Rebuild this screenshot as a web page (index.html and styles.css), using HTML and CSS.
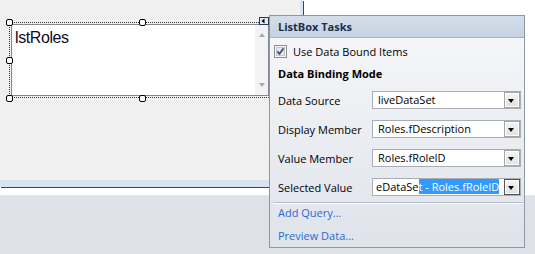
FILE: index.html
```html
<!DOCTYPE html>
<html lang="en">

<head>
  <meta charset="UTF-8">
  <title>ListBox Tasks</title>
  <link rel="stylesheet" href="styles.css">
</head>

<body>
  <div class="designer">
    <div class="surface">
      <div class="form">
        <div class="selection">
          <div class="listbox">
            <div class="items">lstRoles</div>
            <div class="vscroll"><i class="up"></i><i class="down"></i></div>
          </div>
          <i class="grip grip-tl"></i>
          <i class="grip grip-tc"></i>
          <i class="grip grip-ml"></i>
          <i class="grip grip-bl"></i>
          <i class="grip grip-bc"></i>
          <span class="smarttag">
            <svg width="10" height="8" viewBox="0 0 10 8">
              <rect x="0.5" y="0.5" width="9" height="7" fill="#dfeaf6" stroke="#2c3a4e"/>
              <polygon points="2.5,4 5.5,1.5 5.5,6.5" fill="#000"/>
            </svg>
          </span>
        </div>
      </div>
    </div>
    <div class="tray"></div>

    <div class="tasks">
      <div class="tasks-head">ListBox Tasks</div>
      <div class="tasks-body">
        <label class="check">
          <svg width="13" height="13" viewBox="0 0 13 13">
            <rect x="0.5" y="0.5" width="12" height="12" fill="#f6f6f6" stroke="#8e8f8f"/>
            <rect x="2.5" y="2.5" width="8" height="8" fill="#e4e7ec" stroke="#c3c8d0"/>
            <path d="M3.3 6.4 L5.4 8.8 L9.6 3.4" fill="none" stroke="#3d5487" stroke-width="1.8"/>
          </svg>
          Use Data Bound Items
        </label>
        <div class="group">Data Binding Mode</div>
        <div class="fields">
          <div class="field">
            <span class="name">Data Source</span>
            <div class="combo"><span class="value">liveDataSet</span><span class="drop"></span></div>
          </div>
          <div class="field">
            <span class="name">Display Member</span>
            <div class="combo"><span class="value">Roles.fDescription</span><span class="drop"></span></div>
          </div>
          <div class="field">
            <span class="name">Value Member</span>
            <div class="combo"><span class="value">Roles.fRoleID</span><span class="drop"></span></div>
          </div>
          <div class="field">
            <span class="name">Selected Value</span>
            <div class="combo focused"><span class="value scrolled">eDataSe<span class="sel">t - Roles.fRoleID</span></span><span class="drop"></span></div>
          </div>
        </div>
        <div class="sep"></div>
        <a class="link">Add Query...</a>
        <a class="link">Preview Data...</a>
      </div>
    </div>
  </div>
</body>

</html>
```

FILE: styles.css
```css
* {
  margin: 0;
  padding: 0;
  box-sizing: border-box;
}

body {
  width: 535px;
  height: 254px;
  overflow: hidden;
  background: #fff;
  font-family: "Open Sans", "Liberation Sans", sans-serif;
  font-size: 11px;
  color: #000;
}

.designer {
  position: relative;
  height: 254px;
  display: flex;
  flex-direction: column;
}

.surface {
  flex: none;
  height: 195px;
}

/* form being designed */
.form {
  width: 303px;
  height: 187px;
  padding: 22px 0 0 9px;
  background: #f0f0f0;
  border-right: 3px solid #d7e4f2;
  border-bottom: 7px solid #d7e4f2;
  box-shadow: 1px 1px 0 #40454d;
}

.tray {
  flex: 1;
  background: #dfe1e8;
  border-top: 1px solid #e7e8eb;
}

/* selected listbox */
.selection {
  position: relative;
  width: 262px;
  height: 76px;
  padding: 1px;
  border: 1px dotted #333;
}

.listbox {
  display: flex;
  height: 100%;
  border: 1px solid #828790;
  background: #fff;
}

.items {
  flex: 1;
  padding: 4px 0 0 3px;
  font-family: "Liberation Sans", Arial, sans-serif;
  font-size: 16px;
  letter-spacing: -0.4px;
  line-height: 18px;
  color: #0c0c24;
}

.vscroll {
  width: 13px;
  padding: 8px 0;
  display: flex;
  flex-direction: column;
  justify-content: space-between;
  align-items: center;
  background: #f3f3f3;
}

.vscroll i {
  display: block;
  width: 0;
  height: 0;
  border-left: 3.5px solid transparent;
  border-right: 3.5px solid transparent;
}

.vscroll .up {
  border-bottom: 4px solid #a8a8a8;
}

.vscroll .down {
  border-top: 4px solid #a8a8a8;
}

.grip {
  position: absolute;
  width: 7px;
  height: 7px;
  border: 1px solid #000;
  border-radius: 2px;
  background: #fff;
}

.grip-tl { left: -4px; top: -4px; }
.grip-tc { left: 129px; top: -4px; }
.grip-ml { left: -4px; top: 34px; }
.grip-bl { left: -4px; top: 72px; }
.grip-bc { left: 129px; top: 72px; }

.smarttag {
  position: absolute;
  left: 249px;
  top: -6px;
  width: 10px;
  height: 8px;
}

.smarttag svg {
  display: block;
}

/* smart tag panel */
.tasks {
  position: absolute;
  left: 269px;
  top: 15px;
  width: 256px;
  height: 233px;
  border: 1px solid #8e98a5;
  background: linear-gradient(to bottom, #f7f8fa, #dfe3ea);
}

.tasks-head {
  height: 22px;
  padding-left: 8px;
  line-height: 21px;
  font-weight: bold;
  color: #1b2f4d;
  background: linear-gradient(to bottom, #d3dee9, #c5d2e2);
  border-bottom: 1px solid #a5b2c3;
}

.tasks-body {
  padding: 0 3px 0 8px;
}

.check {
  display: flex;
  align-items: center;
  gap: 6px;
  height: 20px;
  margin: 3px 0 0 -4px;
}

.check svg {
  display: block;
}

.group {
  height: 18px;
  margin-top: 4px;
  line-height: 18px;
  font-weight: bold;
}

.fields {
  display: flex;
  flex-direction: column;
  gap: 9px;
  margin-top: 7px;
}

.field {
  display: flex;
  align-items: center;
  height: 20px;
}

.name {
  width: 94px;
  flex: none;
}

.combo {
  display: flex;
  width: 150px;
  height: 18px;
  border: 1px solid #a9adb4;
  background: #fff;
}

.value {
  flex: 1;
  padding-left: 5px;
  line-height: 16px;
  white-space: nowrap;
  overflow: hidden;
}

.value.scrolled {
  padding-left: 3px;
}

.sel {
  background: #3399ff;
  color: #fff;
}

.drop {
  position: relative;
  flex: none;
  width: 16px;
  border: 1px solid #a6a6a6;
  background: linear-gradient(to bottom, #f4f4f4, #e1e1e1);
  box-shadow: inset 0 0 0 1px #fff;
}

.drop::after {
  content: "";
  position: absolute;
  left: 3px;
  top: 6px;
  border-left: 3.5px solid transparent;
  border-right: 3.5px solid transparent;
  border-top: 4px solid #000;
}

.focused .drop {
  border-color: #555;
}

.sep {
  height: 2px;
  margin: 5px -2px 0 -5px;
  border-top: 1px solid #b3bbc6;
  border-bottom: 1px solid #fff;
}

.link {
  display: block;
  height: 18px;
  line-height: 18px;
  color: #2a6bd3;
  cursor: pointer;
}

.link + .link {
  margin-top: 5px;
}
```
